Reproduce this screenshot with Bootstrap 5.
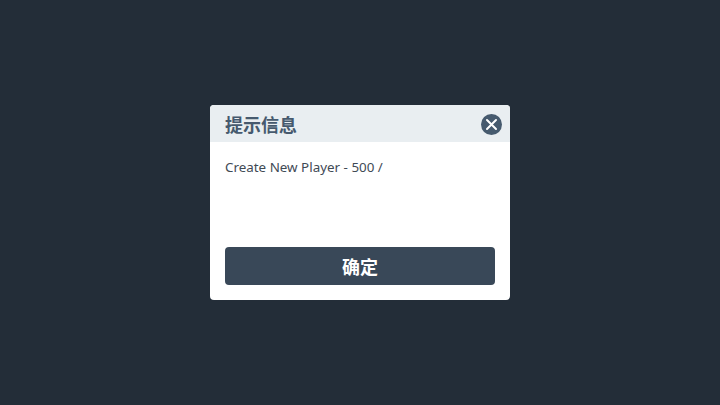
<!DOCTYPE html>
<html lang="zh">
<head>
<meta charset="utf-8">
<title>提示信息</title>
<link href="https://cdn.jsdelivr.net/npm/bootstrap@5.3.0/dist/css/bootstrap.min.css" rel="stylesheet">
<style>
html,body{height:100%;}
body{background:#232d38;font-family:"Noto Sans","Noto Sans CJK SC",sans-serif;}
.dlg-box{width:300px;height:195px;border-radius:4px;overflow:hidden;background:#fff;}
.dlg-head{height:37px;background:#e9eef1;padding:1px 8px 0 15px;}
.dlg-title{font-size:18px;font-weight:700;line-height:1;color:#465a6e;font-family:"Noto Sans CJK SC",sans-serif;}
.dlg-close{width:21px;height:21px;padding:0;border:0;background:none;line-height:0;}
.dlg-body{padding:15px;}
.dlg-text{font-size:13.4px;line-height:20px;color:#3f4a55;}
.dlg-ok{height:38px;background:#394858;color:#fff;border:0;border-radius:4px;font-size:18px;font-weight:700;line-height:1;padding:0;font-family:"Noto Sans CJK SC",sans-serif;}
.dlg-ok:hover{background:#394858;color:#fff;}
</style>
</head>
<body class="d-flex align-items-center justify-content-center m-0">
<div class="dlg-box d-flex flex-column">
  <div class="dlg-head d-flex align-items-center justify-content-between">
    <div class="dlg-title">提示信息</div>
    <button class="dlg-close" type="button" aria-label="关闭">
      <svg width="21" height="21" viewBox="0 0 21 21"><circle cx="10.5" cy="10.5" r="10.5" fill="#465a6e"/><path d="M6 6L15 15M15 6L6 15" stroke="#fff" stroke-width="2" stroke-linecap="round"/></svg>
    </button>
  </div>
  <div class="dlg-body d-flex flex-column flex-grow-1 justify-content-between">
    <div class="dlg-text">Create New Player - 500 /</div>
    <button class="btn dlg-ok w-100" type="button">确定</button>
  </div>
</div>
<script src="https://cdn.jsdelivr.net/npm/bootstrap@5.3.0/dist/js/bootstrap.bundle.min.js"></script>
</body>
</html>
